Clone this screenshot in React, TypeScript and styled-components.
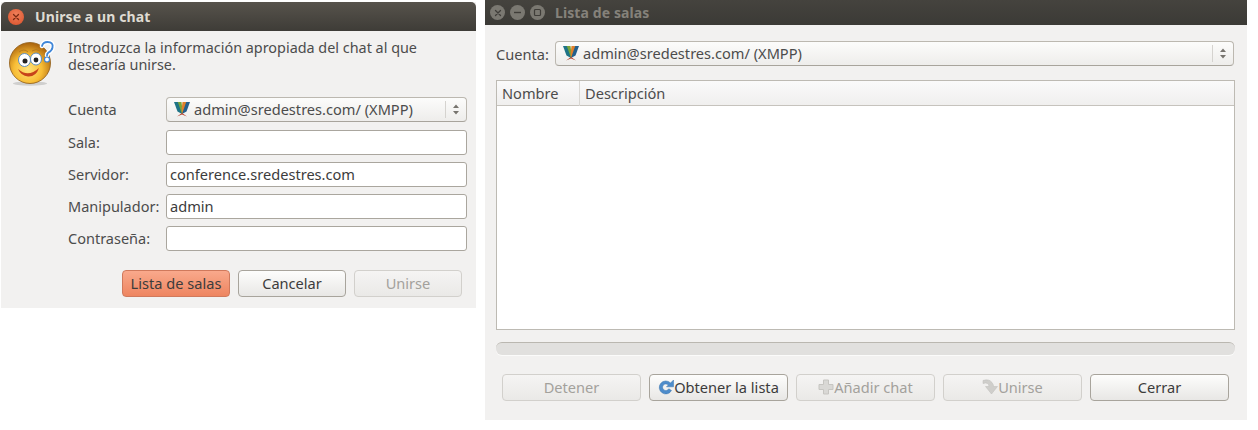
import styled, { createGlobalStyle } from "styled-components";

const Global = createGlobalStyle`
  html, body { margin: 0; padding: 0; background: #fff; }
  body { font-family: "Noto Sans", "Open Sans", sans-serif; font-size: 14.6px; color: #3c3c3c; }
`;

const Page = styled.div`
  width: 1258px;
  height: 430px;
  display: flex;
  align-items: flex-start;
  overflow: hidden;
`;

const Win = styled.section<{ $w: number; $h: number; $ml: number; $mt: number }>`
  width: ${(p) => p.$w}px;
  height: ${(p) => p.$h}px;
  margin-left: ${(p) => p.$ml}px;
  margin-top: ${(p) => p.$mt}px;
  background: #f2f1f0;
  display: flex;
  flex-direction: column;
  flex: none;
`;

const TitleBar = styled.header<{ $h: number; $active?: boolean }>`
  height: ${(p) => p.$h}px;
  flex: none;
  display: flex;
  align-items: center;
  gap: 5px;
  padding-left: ${(p) => (p.$active ? 7 : 5)}px;
  border-radius: ${(p) => (p.$active ? "5px 5px 0 0" : "0")};
  background: ${(p) =>
    p.$active ? "linear-gradient(#57534c, #3e3c37)" : "linear-gradient(#45433e, #3b3a36)"};
`;

const Title = styled.h1<{ $active?: boolean }>`
  margin: 0 0 0 ${(p) => (p.$active ? 6 : 5)}px;
  font-size: 14px;
  font-weight: 700;
  letter-spacing: 0.1px;
  color: ${(p) => (p.$active ? "#dfdbd2" : "#85827b")};
`;

const WinBtn = styled.span<{ $close?: boolean }>`
  width: ${(p) => (p.$close ? 16 : 15)}px;
  height: ${(p) => (p.$close ? 16 : 15)}px;
  border-radius: 50%;
  flex: none;
  display: flex;
  align-items: center;
  justify-content: center;
  background: ${(p) =>
    p.$close ? "radial-gradient(circle at 50% 35%, #f0805a, #d9502a)" : "#7a7871"};
  svg { display: block; }
`;

const Intro = styled.div`
  display: flex;
  align-items: flex-start;
  padding: 9px 0 0 7px;
  height: 51px;
  flex: none;
`;

const IntroText = styled.p`
  margin: -1px 0 0 12px;
  width: 385px;
  font-size: 14.4px;
  line-height: 17px;
  color: #4c4c4c;
`;

const Form = styled.div`
  display: grid;
  grid-template-columns: 98px 301px;
  grid-template-rows: 26px repeat(4, 25px);
  row-gap: 7px;
  padding-left: 67px;
  margin-top: 6px;
  align-items: center;
`;

const FieldLabel = styled.label`
  color: #4c4c4c;
  font-size: 14.5px;
  padding-bottom: 2px;
`;

const Input = styled.div`
  height: 25px;
  box-sizing: border-box;
  background: #fff;
  border: 1px solid #aaa69e;
  border-radius: 3px;
  padding-left: 3px;
  line-height: 23px;
  color: #3c3c3c;
`;

const Combo = styled.div<{ $w?: number }>`
  height: 25px;
  width: ${(p) => (p.$w ? `${p.$w}px` : "auto")};
  align-self: start;
  box-sizing: border-box;
  border: 1px solid #bcb8b0;
  border-bottom-color: #a8a49c;
  border-radius: 4px;
  background: linear-gradient(#fcfcfb, #eeedeb);
  display: flex;
  align-items: center;
  padding: 0 0 1px 7px;
  color: #4c4c4c;
`;

const ComboText = styled.span`
  margin-left: 4px;
  flex: 1;
`;

const Spin = styled.span`
  width: 20px;
  height: 17px;
  border-left: 1px solid #d5d3cf;
  display: flex;
  align-items: center;
  justify-content: center;
  flex: none;
`;

const ButtonRow = styled.div<{ $pad: string; $top: number }>`
  display: flex;
  padding: ${(p) => p.$pad};
  gap: 8px;
  margin-top: ${(p) => p.$top}px;
`;

const Btn = styled.button<{ $w: number; $kind?: "primary" | "off" }>`
  width: ${(p) => p.$w}px;
  height: 27px;
  box-sizing: border-box;
  padding: 0 0 1px;
  font-family: inherit;
  font-size: 14.6px;
  display: flex;
  align-items: center;
  justify-content: center;
  border-radius: 4px;
  border: 1px solid
    ${(p) => (p.$kind === "primary" ? "#d0795c" : p.$kind === "off" ? "#d2d0cc" : "#a8a49c")};
  color: ${(p) => (p.$kind === "off" ? "#a3a19c" : "#3c3c3c")};
  background: ${(p) =>
    p.$kind === "primary"
      ? "linear-gradient(#f9a98c, #ee8560)"
      : p.$kind === "off"
      ? "linear-gradient(#f5f4f3, #eae9e7)"
      : "linear-gradient(#fdfdfc, #e8e7e5)"};
  svg { flex: none; }
`;

const AccountRow = styled.div`
  display: flex;
  align-items: center;
  padding: 16px 13px 0 11px;
  height: 25px;
  flex: none;
`;

const AccountLabel = styled.span`
  width: 59px;
  flex: none;
  color: #4c4c4c;
`;

const Table = styled.div`
  margin: 14px 12px 0 11px;
  height: 250px;
  box-sizing: border-box;
  border: 1px solid #bdbab3;
  background: #fff;
  flex: none;
`;

const TableHead = styled.div`
  height: 25px;
  box-sizing: border-box;
  display: grid;
  grid-template-columns: 82px 1fr;
  background: linear-gradient(#fafafa, #f0efee);
  border-bottom: 1px solid #c6c3bd;
`;

const HeadCell = styled.span`
  padding-left: 5px;
  line-height: 25px;
  color: #4c4c4c;
  & + & { border-left: 1px solid #d8d6d2; }
`;

const Progress = styled.div`
  margin: 12px 12px 0 11px;
  height: 13px;
  box-sizing: border-box;
  flex: none;
  border-radius: 6px;
  background: #e1e0de;
  border-top: 1px solid #bab7b0;
  box-shadow: 0 1px 0 #fbfbfa;
`;

const Smiley = () => (
  <svg width="48" height="46" viewBox="0 0 48 46">
    <defs>
      <radialGradient id="face" cx="45%" cy="65%" r="62%">
        <stop offset="0" stopColor="#ffe27a" />
        <stop offset="0.55" stopColor="#f8bd35" />
        <stop offset="1" stopColor="#b06a10" />
      </radialGradient>
    </defs>
    <ellipse cx="22" cy="43.500" rx="17" ry="2.200" fill="#000" opacity="0.14" />
    <circle cx="22" cy="23" r="20.500" fill="url(#face)" stroke="#8e5a14" strokeWidth="0.8" />
    <path d="M11 12q5-4 9 0M24 11q4-3 8 0" fill="none" stroke="#b77a20" strokeWidth="1" />
    <ellipse cx="16.500" cy="20" rx="6" ry="6.500" fill="#fff" stroke="#5f8fc0" strokeWidth="1" />
    <ellipse cx="28" cy="19" rx="5.500" ry="6" fill="#fff" stroke="#5f8fc0" strokeWidth="1" />
    <circle cx="17" cy="21" r="2.500" fill="#222" />
    <circle cx="28" cy="20" r="2.400" fill="#222" />
    <path d="M10 29q10 9 21-1q-3 9-11 8.500q-7-.5-10-7.500z" fill="#c7431a" />
    <path d="M34 6q1-4 5.500-4q6 0 5 5.500q-.5 3-4 5q-1.500 1-1.500 3" fill="none" stroke="#fff" strokeWidth="4.500" strokeLinecap="round" />
    <path d="M34 6q1-4 5.500-4q6 0 5 5.500q-.5 3-4 5q-1.500 1-1.500 3" fill="none" stroke="#3f86d8" strokeWidth="1.800" strokeLinecap="round" />
    <circle cx="39" cy="19.500" r="2.500" fill="#fff" stroke="#3f86d8" strokeWidth="1.200" />
  </svg>
);

const XmppIcon = () => (
  <svg width="16" height="16" viewBox="0 0 16 16">
    <path d="M0 1h4.500L8 8.500V13L3.500 10.500z" fill="#1f7486" />
    <path d="M3.800 1H7.500L8.300 7.500 8 13z" fill="#7aa53a" />
    <path d="M16 1h-4.500L8 8.500V13l4.500-2.500z" fill="#24608c" />
    <path d="M12.200 1H8.500L7.700 7.500 8 13z" fill="#e0812c" />
    <path d="M3 15.500l5-3.500 5 3.500-5-2z" fill="#b5402a" />
  </svg>
);

const Updown = () => (
  <svg width="8" height="13" viewBox="0 0 8 13">
    <path d="M4 1.500l3 3.500H1zM4 11.500L1 8h6z" fill="#77746e" />
  </svg>
);

const RefreshIcon = () => (
  <svg width="16" height="16" viewBox="0 0 16 16">
    <path d="M12.500 4A6.500 6.500 0 1 0 13.500 11.500L10.800 9.800A3.300 3.300 0 1 1 10.300 6L8.500 7.800H15.500V1z" fill="#4d8ccb" stroke="#3d74ad" strokeWidth="0.5" />
  </svg>
);

const PlusIcon = () => (
  <svg width="16" height="16" viewBox="0 0 16 16">
    <path d="M5.500 1h5v4.500H15v5h-4.500V15h-5v-4.500H1v-5h4.500z" fill="#d9d8d5" stroke="#c6c5c1" />
  </svg>
);

const JoinIcon = () => (
  <svg width="16" height="16" viewBox="0 0 16 16">
    <path d="M1 1.500q6-2 9 2q1.500 2 1.500 4H15.500L9.500 15 3.500 7.500h3.500q0-2-1.500-3T1 4.500z" fill="#cfcecb" stroke="#bdbcb8" strokeWidth="0.5" />
  </svg>
);

const CloseGlyph = ({ c }: { c: string }) => (
  <svg width="8" height="8" viewBox="0 0 8 8">
    <path d="M1.500 1.500l5 5M6.500 1.500l-5 5" stroke={c} strokeWidth="1.300" strokeLinecap="round" />
  </svg>
);

const MinGlyph = () => (
  <svg width="9" height="9" viewBox="0 0 9 9">
    <path d="M1 4.500h7" stroke="#3f3d39" strokeWidth="1.400" />
  </svg>
);

const MaxGlyph = () => (
  <svg width="9" height="9" viewBox="0 0 9 9">
    <rect x="1.500" y="1.500" width="6" height="6" rx="1" fill="none" stroke="#3f3d39" strokeWidth="1.200" />
  </svg>
);

export default function App() {
  return (
    <Page>
      <Global />
      <Win $w={475} $h={306} $ml={1} $mt={2}>
        <TitleBar $h={29} $active>
          <WinBtn $close>
            <CloseGlyph c="#7a2a12" />
          </WinBtn>
          <Title $active>Unirse a un chat</Title>
        </TitleBar>
        <Intro>
          <Smiley />
          <IntroText>
            Introduzca la información apropiada del chat al que desearía unirse.
          </IntroText>
        </Intro>
        <Form>
          <FieldLabel>Cuenta</FieldLabel>
          <Combo>
            <XmppIcon />
            <ComboText>admin@sredestres.com/ (XMPP)</ComboText>
            <Spin>
              <Updown />
            </Spin>
          </Combo>
          <FieldLabel>Sala:</FieldLabel>
          <Input />
          <FieldLabel>Servidor:</FieldLabel>
          <Input>conference.sredestres.com</Input>
          <FieldLabel>Manipulador:</FieldLabel>
          <Input>admin</Input>
          <FieldLabel>Contraseña:</FieldLabel>
          <Input />
        </Form>
        <ButtonRow $pad="0 0 0 121px" $top={19}>
          <Btn $w={108} $kind="primary">Lista de salas</Btn>
          <Btn $w={108}>Cancelar</Btn>
          <Btn $w={108} $kind="off">Unirse</Btn>
        </ButtonRow>
      </Win>

      <Win $w={762} $h={420} $ml={9} $mt={0}>
        <TitleBar $h={25}>
          <WinBtn><CloseGlyph c="#3f3d39" /></WinBtn>
          <WinBtn><MinGlyph /></WinBtn>
          <WinBtn><MaxGlyph /></WinBtn>
          <Title>Lista de salas</Title>
        </TitleBar>
        <AccountRow>
          <AccountLabel>Cuenta:</AccountLabel>
          <Combo $w={680}>
            <XmppIcon />
            <ComboText>admin@sredestres.com/ (XMPP)</ComboText>
            <Spin>
              <Updown />
            </Spin>
          </Combo>
        </AccountRow>
        <Table>
          <TableHead>
            <HeadCell>Nombre</HeadCell>
            <HeadCell>Descripción</HeadCell>
          </TableHead>
        </Table>
        <Progress />
        <ButtonRow $pad="0 0 0 17px" $top={19}>
          <Btn $w={139} $kind="off">Detener</Btn>
          <Btn $w={139}><RefreshIcon />Obtener la lista</Btn>
          <Btn $w={139} $kind="off"><PlusIcon />Añadir chat</Btn>
          <Btn $w={139} $kind="off"><JoinIcon />Unirse</Btn>
          <Btn $w={139}>Cerrar</Btn>
        </ButtonRow>
      </Win>
    </Page>
  );
}
